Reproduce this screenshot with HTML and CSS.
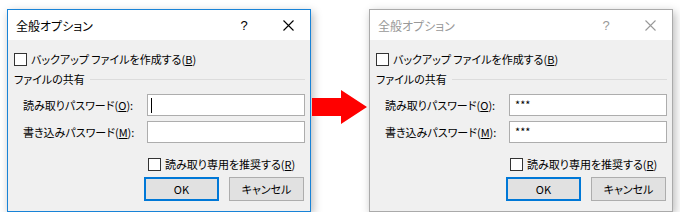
FILE: index.html
```html
<!DOCTYPE html>
<html lang="ja">
<head>
    <meta charset="UTF-8">
    <title>全般オプション</title>
    <link rel="stylesheet" href="styles.css">
</head>
<body>
<div class="stage">
    <!-- Before: empty passwords, active window -->
    <div class="dialog active">
        <div class="titlebar">
            <span class="title">全般オプション</span>
            <span class="help">?</span>
            <span class="close">
                <svg width="11" height="11" viewBox="0 0 11 11"><path d="M0.5 0.5 L10.5 10.5 M10.5 0.5 L0.5 10.5" stroke="currentColor" stroke-width="1.1" fill="none"/></svg>
            </span>
        </div>
        <div class="body">
            <div class="check"><span class="box"></span>バックアップ ファイルを作成する(<u>B</u>)</div>
            <div class="group"><span>ファイルの共有</span><span class="rule"></span></div>
            <div class="field">
                <span class="label">読み取りパスワード(<u>O</u>):</span>
                <div class="textbox"><span class="caret"></span></div>
            </div>
            <div class="field">
                <span class="label">書き込みパスワード(<u>M</u>):</span>
                <div class="textbox"></div>
            </div>
            <div class="check readonly"><span class="box"></span>読み取り専用を推奨する(<u>R</u>)</div>
            <div class="buttons">
                <div class="btn default">OK</div>
                <div class="btn">キャンセル</div>
            </div>
        </div>
    </div>

    <div class="arrow">
        <svg width="56" height="35" viewBox="0 0 56 35"><polygon points="0,8 29,8 29,0 55,17 29,34 29,26 0,26" fill="#ff0000"/></svg>
    </div>

    <!-- After: passwords filled in, window inactive -->
    <div class="dialog inactive">
        <div class="titlebar">
            <span class="title">全般オプション</span>
            <span class="help">?</span>
            <span class="close">
                <svg width="11" height="11" viewBox="0 0 11 11"><path d="M0.5 0.5 L10.5 10.5 M10.5 0.5 L0.5 10.5" stroke="currentColor" stroke-width="1.1" fill="none"/></svg>
            </span>
        </div>
        <div class="body">
            <div class="check"><span class="box"></span>バックアップ ファイルを作成する(<u>B</u>)</div>
            <div class="group"><span>ファイルの共有</span><span class="rule"></span></div>
            <div class="field">
                <span class="label">読み取りパスワード(<u>O</u>):</span>
                <div class="textbox">***</div>
            </div>
            <div class="field">
                <span class="label">書き込みパスワード(<u>M</u>):</span>
                <div class="textbox">***</div>
            </div>
            <div class="check readonly"><span class="box"></span>読み取り専用を推奨する(<u>R</u>)</div>
            <div class="buttons">
                <div class="btn default">OK</div>
                <div class="btn">キャンセル</div>
            </div>
        </div>
    </div>
</div>
</body>
</html>
```

FILE: styles.css
```css
/* Page */
body {
    margin: 0;
    background-color: #fff;
    font-family: "Noto Sans CJK JP", "Noto Sans", sans-serif;
    font-size: 11px;
    font-feature-settings: "palt";
    color: #000;
}

.stage {
    display: flex;
    align-items: flex-start;
    padding: 9px 0 0 7px;
}

/* Dialog window */
.dialog {
    width: 304px;
    box-sizing: border-box;
    border: 1px solid #1883d7;
    background-color: #f0f0f0;
    box-shadow: 2px 3px 9px rgba(0, 0, 0, 0.28);
}

.dialog.inactive {
    border-color: #aaaaaa;
}

.titlebar {
    display: flex;
    align-items: center;
    height: 30px;
    padding-left: 8px;
    background-color: #fff;
    font-size: 12px;
}

.title {
    flex: 1;
}

.help {
    width: 44px;
    text-align: center;
    font-family: "Liberation Sans", sans-serif;
    font-size: 13px;
}

.close {
    width: 44px;
    display: flex;
    justify-content: center;
    align-items: center;
}

.inactive .titlebar {
    color: #999;
}

/* Dialog body */
.body {
    padding: 11px 5px 10px 6px;
    line-height: 16px;
}

.check {
    display: flex;
    align-items: center;
    height: 16px;
    white-space: nowrap;
}

.check .box {
    width: 13px;
    height: 13px;
    box-sizing: border-box;
    border: 1px solid #333;
    background-color: #fff;
    margin-right: 4px;
}

.group {
    display: flex;
    align-items: center;
    margin-top: 4px;
    height: 16px;
}

.group .rule {
    flex: 1;
    height: 1px;
    background-color: #dcdcdc;
    margin-left: 5px;
}

.field {
    display: flex;
    align-items: center;
    margin-top: 7px;
    white-space: nowrap;
}

.field + .field {
    margin-top: 5px;
}

.field .label {
    flex: 1;
    padding-left: 9px;
}

.textbox {
    width: 158px;
    height: 22px;
    box-sizing: border-box;
    border: 1px solid #adadad;
    background-color: #fff;
    padding: 1px 0 0 5px;
    line-height: 16px;
    position: relative;
}

.caret {
    position: absolute;
    left: 3px;
    top: 3px;
    width: 1px;
    height: 15px;
    background-color: #000;
}

.check.readonly {
    margin: 13px 0 0 134px;
}

/* Buttons */
.buttons {
    display: flex;
    justify-content: flex-end;
    gap: 10px;
    margin: 5px 1px 0 0;
}

.btn {
    width: 75px;
    height: 24px;
    box-sizing: border-box;
    border: 1px solid #adadad;
    background-color: #e1e1e1;
    display: flex;
    align-items: center;
    justify-content: center;
}

.btn.default {
    border: 2px solid #0078d7;
}

/* Red arrow between the two states */
.arrow {
    width: 58px;
    margin-top: 81px;
    padding-left: 1px;
    box-sizing: border-box;
}

.arrow svg {
    display: block;
}
```
